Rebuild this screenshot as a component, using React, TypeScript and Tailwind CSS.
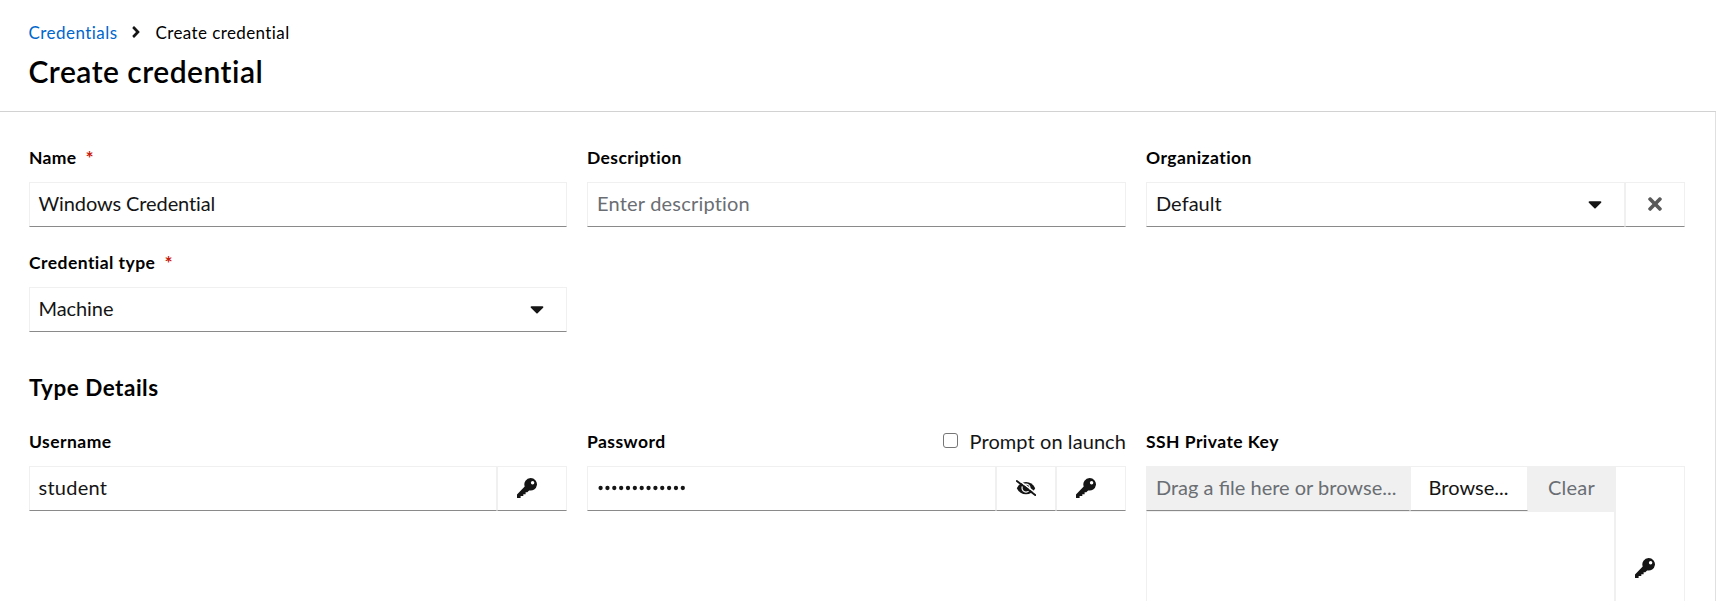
import type { ReactNode } from "react";
import { FaAngleRight, FaCaretDown, FaTimes } from "react-icons/fa";

const control =
  "flex h-[45px] items-center border border-[#f0f0f0] border-b-[#8a8a8a] bg-white text-[20px] leading-none whitespace-nowrap text-[#151515]";

function KeyIcon() {
  return (
    <svg width="20" height="20" viewBox="0 0 20 20" fill="currentColor" aria-hidden="true">
      <path
        fillRule="evenodd"
        d="M13.7 0a6.3 6.3 0 1 1-1.6 12.4L10.3 14.3H8.6V16.2H6.3V18H3.6V20H0V16.4L7.7 8.4A6.3 6.3 0 0 1 13.7 0ZM15.6 2.9a1.75 1.75 0 1 0 0 3.5a1.75 1.75 0 1 0 0-3.5Z"
      />
    </svg>
  );
}

function EyeSlashIcon() {
  return (
    <svg width="20" height="16" viewBox="0 0 20 16" aria-hidden="true">
      <path d="M.8 8.2C2.8 4.2 6 2 10 2s7.2 2.2 9.2 6.2C17.200 12.200 14 14.300 10 14.300S2.800 12.200.8 8.200Z" fill="currentColor" />
      <circle cx="10" cy="8.100" r="4" fill="none" stroke="#fff" strokeWidth="1.200" />
      <path d="M1.500-.8L20.400 13.600" stroke="#fff" strokeWidth="1.500" />
      <path d="M.8 1L19.200 15.100" stroke="currentColor" strokeWidth="1.900" strokeLinecap="round" />
    </svg>
  );
}

function Field({
  label,
  tracking,
  required = false,
  aside,
  children,
}: {
  label: string;
  tracking: string;
  required?: boolean;
  aside?: ReactNode;
  children: ReactNode;
}) {
  return (
    <div className="flex flex-col">
      <div className="mb-3 flex h-6 items-center justify-between">
        <label className="flex items-center text-[17.5px] leading-6 font-bold whitespace-nowrap text-black">
          <span className={tracking}>{label}</span>
          {required && (
            <span className="ml-[9px] text-[19px] text-[#c9190b]">*</span>
          )}
        </label>
        {aside}
      </div>
      {children}
    </div>
  );
}

function KeyButton({ className = "" }: { className?: string }) {
  return (
    <button type="button" aria-label="Secret lookup" className={`${control} w-[70px] pb-px pl-[19px] ${className}`}>
      <KeyIcon />
    </button>
  );
}

export default function App() {
  return (
    <div className="flex h-[601px] w-full flex-col overflow-hidden bg-white font-['Lato',sans-serif] text-[#151515]">
      <header className="flex h-28 shrink-0 flex-col border-b border-[#d2d2d2] pt-[21px] pl-[28.5px]">
        <nav className="flex h-6 items-center text-[17px] leading-6 whitespace-nowrap">
          <a className="w-[88.5px] tracking-[0.46px] text-[#0066cc]">Credentials</a>
          <FaAngleRight className="ml-[13px] h-[18px] w-[12px] -translate-y-px" />
          <span className="ml-[13.5px] tracking-[0.4px] text-black">Create credential</span>
        </nav>
        <h1 className="mt-[6px] text-[30px] leading-10 font-semibold tracking-[0.48px] text-black">
          Create credential
        </h1>
      </header>

      <main className="flex grow flex-col border-r border-[#e0e0e0] pt-[34px] pl-[29px]">
        <div className="grid grid-cols-[538px_539px_539px] gap-x-5 gap-y-6">
          <Field label="Name" tracking="tracking-[0.35px]" required>
            <div className={`${control} pb-[3px] pl-[8.5px] tracking-[-0.1px]`}>Windows Credential</div>
          </Field>
          <Field label="Description" tracking="tracking-[0.4px]">
            <div className={`${control} pb-[3px] pl-[9px] tracking-[0.2px]`}>
              <span className="text-[#6a6e73]">Enter description</span>
            </div>
          </Field>
          <Field label="Organization" tracking="tracking-[0.45px]">
            <div className="flex">
              <div className={`${control} w-[479px] justify-between pr-[22px] pb-[2px] pl-[9px]`}>
                <span className="pb-px tracking-[0.05px]">Default</span>
                <FaCaretDown className="h-[22px] w-[14px]" />
              </div>
              <button type="button" aria-label="Clear organization" className={`${control} w-[60px] justify-center pb-[2px]`}>
                <FaTimes className="h-5 w-[14px] text-[#5a5a5a]" />
              </button>
            </div>
          </Field>
          <Field label="Credential type" tracking="tracking-[0.45px]" required>
            <div className={`${control} justify-between pr-[22px] pb-[2px] pl-[8.5px]`}>
              <span className="pb-px tracking-[-0.08px]">Machine</span>
              <FaCaretDown className="h-[22px] w-[14px]" />
            </div>
          </Field>
        </div>

        <h2 className="mt-10 mb-[26px] text-[22.5px] leading-8 font-bold tracking-[0.5px] text-black">
          Type Details
        </h2>

        <div className="grid grid-cols-[538px_539px_539px] gap-x-5">
          <Field label="Username" tracking="tracking-[0.45px]">
            <div className="flex">
              <div className={`${control} grow pb-[3px] pl-[8.5px] tracking-[0.25px]`}>student</div>
              <KeyButton />
            </div>
          </Field>
          <Field
            label="Password"
            tracking="tracking-[0.45px]"
            aside={
              <label className="flex items-center pb-[3px] text-[20px] leading-6 tracking-[0.08px] whitespace-nowrap">
                <span className="mr-[11.5px] size-[15px] rounded-[3px] border border-[#767676] bg-white" />
                Prompt on launch
              </label>
            }
          >
            <div className="flex">
              <div className={`${control} grow pl-[10px]`}>
                <svg width="90" height="6" viewBox="0 0 90 6" className="-translate-y-px" fill="currentColor" aria-label="Hidden password">
                  {Array.from({ length: 13 }, (_, i) => (
                    <circle key={i} cx={2.6 + i * 6.85} cy={3} r={2.15} />
                  ))}
                </svg>
              </div>
              <button type="button" aria-label="Show password" className={`${control} w-[60px] justify-center pb-px`}>
                <EyeSlashIcon />
              </button>
              <KeyButton />
            </div>
          </Field>
          <Field label="SSH Private Key" tracking="tracking-[0.45px]">
            <div className="flex h-[204px]">
              <div className="flex w-[469px] flex-col">
                <div className="flex">
                  <div className="flex h-[45px] w-[264px] items-center border border-[#f0f0f0] border-b-[#8a8a8a] bg-[#f0f0f0] pb-[3px] pl-[9px] text-[20px] leading-none whitespace-nowrap text-[#6a6e73]">
                    Drag a file here or browse...
                  </div>
                  <button type="button" className={`${control} w-[118px] justify-center pr-px pb-[3px]`}>
                    Browse...
                  </button>
                  <button type="button" className="flex h-[45px] w-[87px] items-center justify-center bg-[#f0f0f0] pb-[3px] text-[20px] leading-none tracking-[0.23px] text-[#6a6e73]">
                    Clear
                  </button>
                </div>
                <div className="grow border border-[#f0f0f0]" />
              </div>
              <KeyButton className="h-[204px]!" />
            </div>
          </Field>
        </div>
      </main>
    </div>
  );
}
